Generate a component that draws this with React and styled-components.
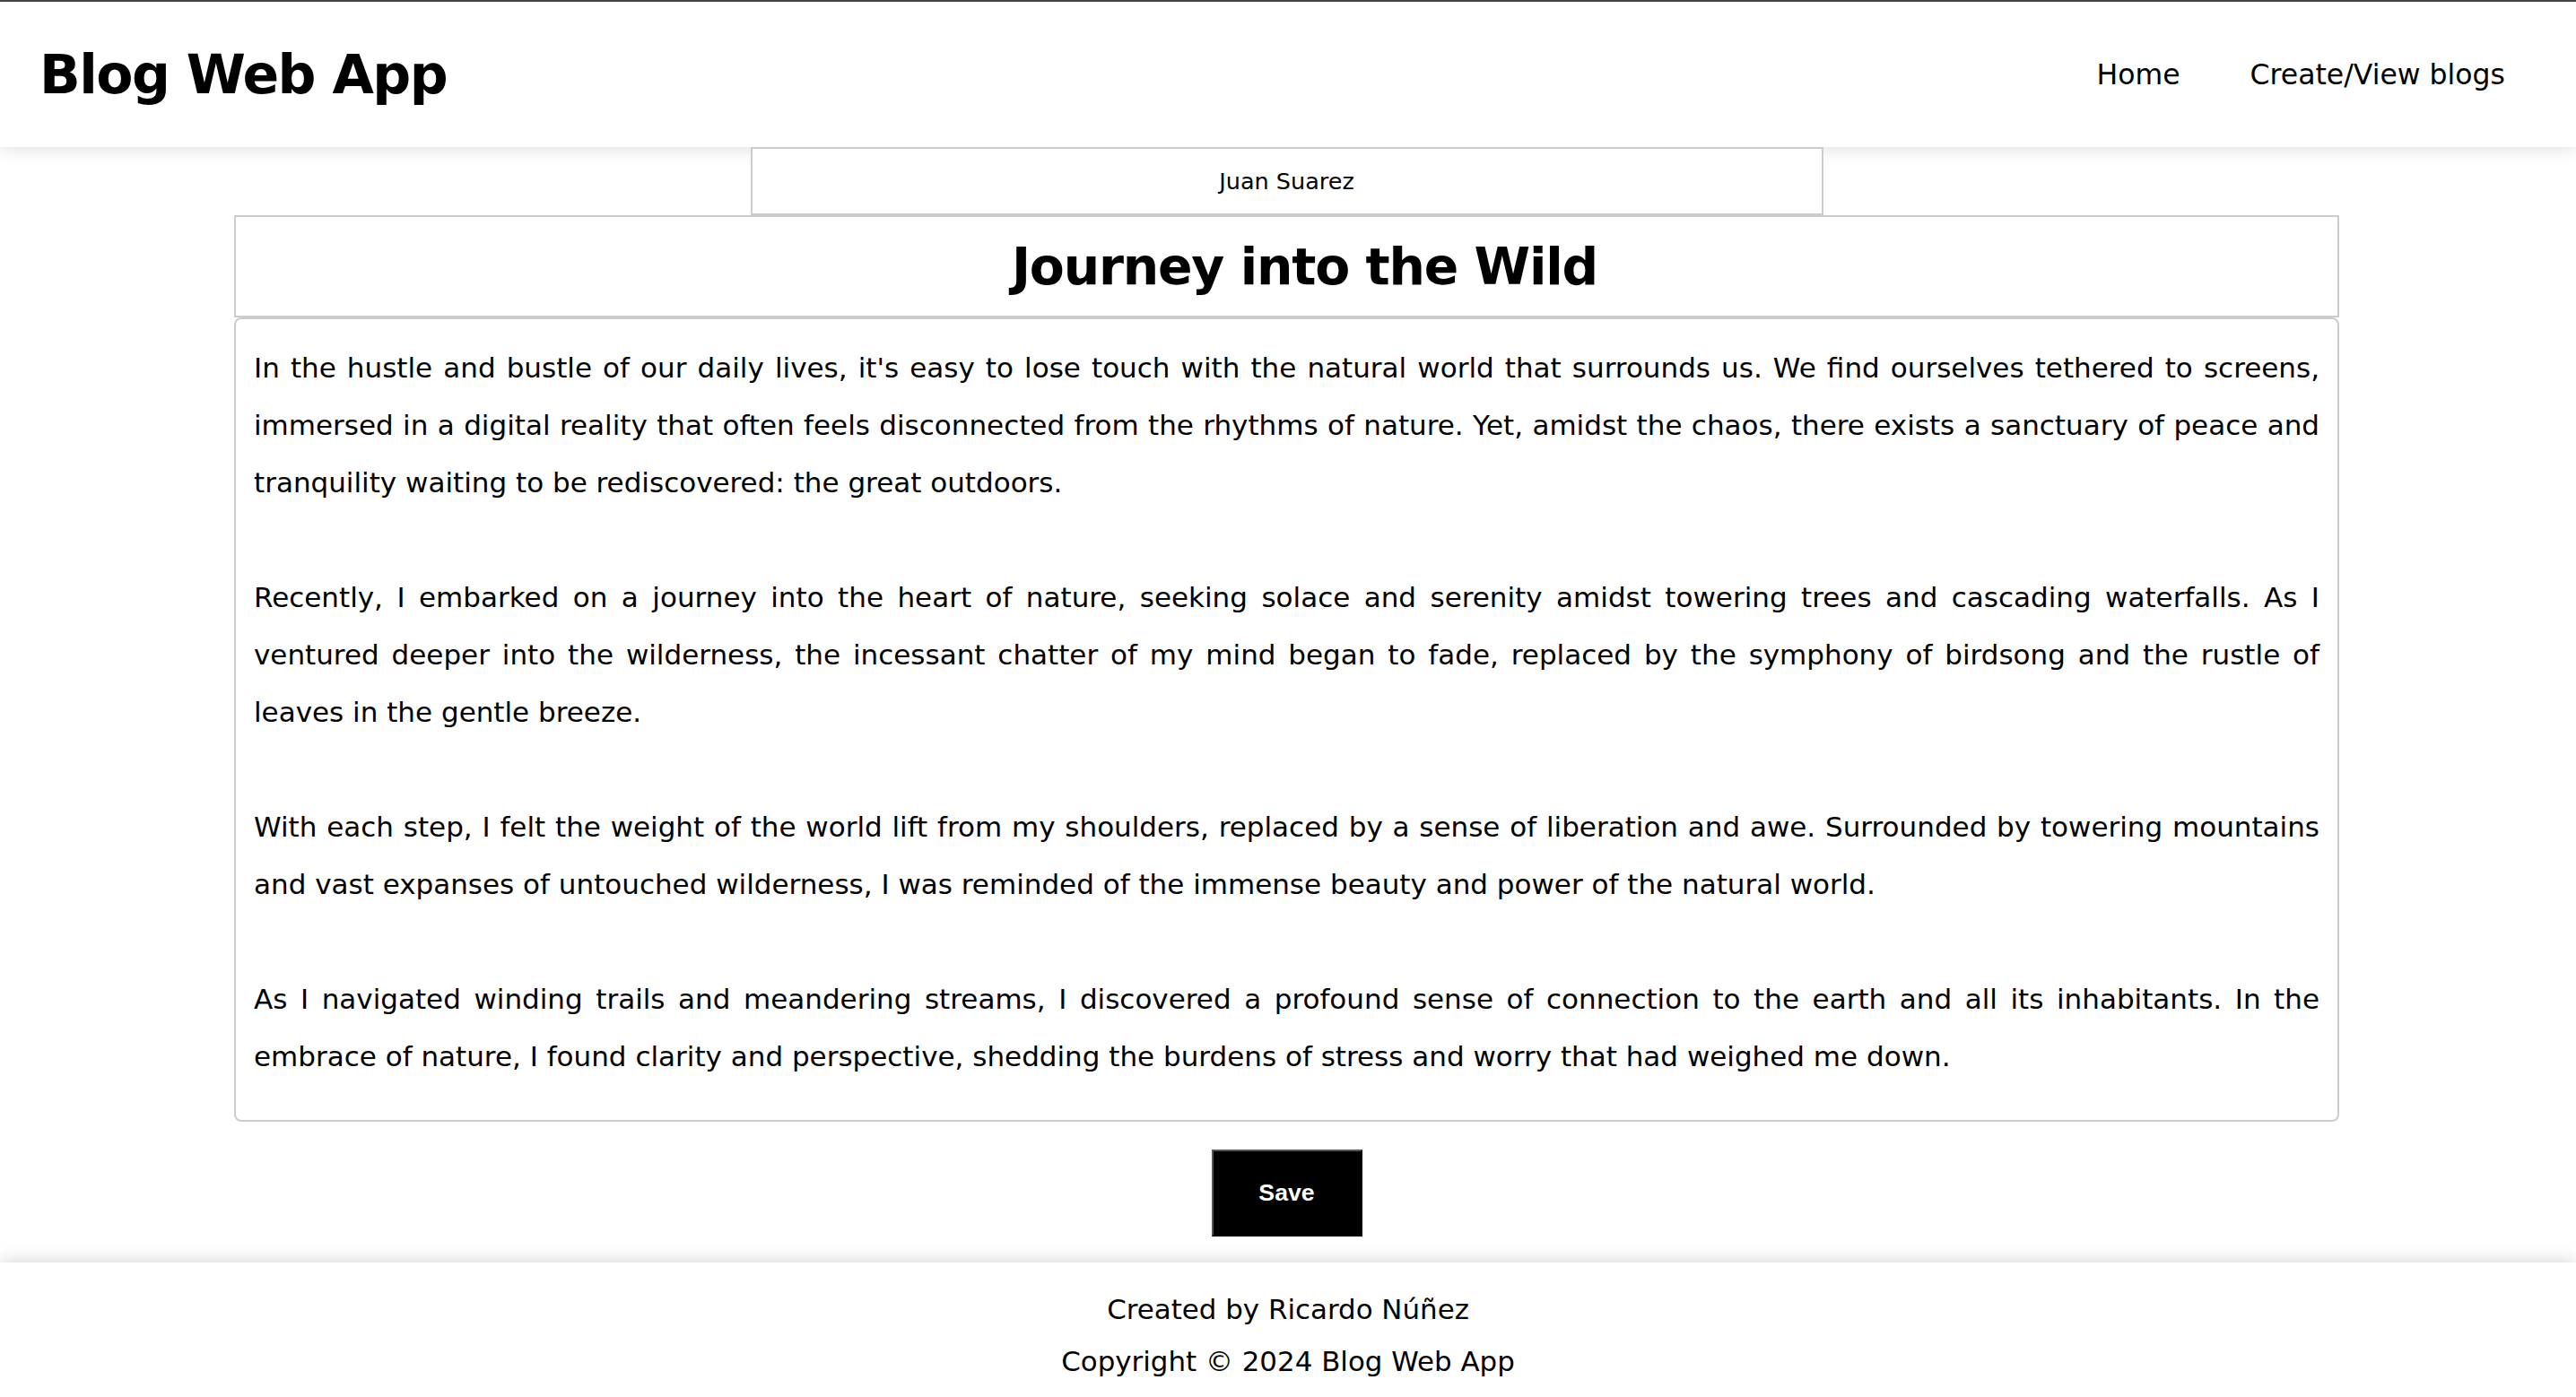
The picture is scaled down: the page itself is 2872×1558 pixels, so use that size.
import React from "react";
import styled, { createGlobalStyle } from "styled-components";

const GlobalStyle = createGlobalStyle`
  html, body {
    margin: 0;
    padding: 0;
    background: #ffffff;
  }
  body {
    font-family: "DejaVu Sans", Verdana, sans-serif;
    color: #000;
  }
  * { box-sizing: border-box; }
`;

const Page = styled.div`
  border-top: 2px solid #474747;
  display: flex;
  flex-direction: column;
  min-height: 100vh;
`;

const Header = styled.header`
  height: 162px;
  display: flex;
  align-items: center;
  justify-content: space-between;
  padding: 0 79px 0 44px;
  background: #fff;
  box-shadow: 0 2px 18px rgba(0, 0, 0, 0.13);
`;

const Brand = styled.div`
  font-family: "DejaVu Sans", Verdana, sans-serif;
  font-weight: 700;
  font-size: 60px;
  letter-spacing: -1.5px;
  line-height: 1;
`;

const Nav = styled.nav`
  display: flex;
  align-items: center;
  gap: 78px;
`;

const NavLink = styled.a`
  font-size: 31.5px;
  color: #000;
  text-decoration: none;
  cursor: pointer;
`;

const Main = styled.main`
  flex: 1;
  display: flex;
  flex-direction: column;
  align-items: center;
  padding-right: 3px;
`;

const AuthorField = styled.input`
  width: 1196px;
  height: 76px;
  border: 2px solid #cccccc;
  background: #fff;
  font-family: "DejaVu Sans", Verdana, sans-serif;
  font-size: 25.5px;
  color: #000;
  text-align: center;
  outline: none;
  padding: 0;
  margin: 0;
`;

const TitleBox = styled.div`
  width: 2347px;
  height: 114px;
  border: 2px solid #cccccc;
  display: flex;
  align-items: center;
  justify-content: center;
  padding-left: 40px;
`;

const Title = styled.h1`
  margin: 0;
  font-size: 56.8px;
  font-weight: 700;
  letter-spacing: -1.2px;
  line-height: 1;
`;

const Card = styled.div`
  width: 2347px;
  border: 2px solid #cccccc;
  border-radius: 8px;
  padding: 22px 20px 39px 20px;
  display: flex;
  flex-direction: column;
  gap: 64px;
`;

const Paragraph = styled.p`
  margin: 0;
  font-size: 31px;
  line-height: 64px;
  text-align: justify;
`;

const SaveButton = styled.button`
  margin-top: 31px;
  width: 168px;
  height: 97px;
  background: #000;
  color: #fff;
  font-family: "Liberation Sans", Arial, sans-serif;
  font-weight: 700;
  font-size: 26.67px;
  border-style: solid;
  border-width: 2px;
  border-color: #555555 #000000 #000000 #555555;
  padding: 0;
  cursor: pointer;
`;

const Footer = styled.footer`
  margin-top: 29px;
  padding: 23px 0 11px;
  background: #fff;
  box-shadow: 0 -2px 18px rgba(0, 0, 0, 0.16);
  text-align: center;
`;

const FooterLine = styled.div`
  font-size: 30.9px;
  line-height: 58px;
`;

const paragraphs = [
  "In the hustle and bustle of our daily lives, it's easy to lose touch with the natural world that surrounds us. We find ourselves tethered to screens, immersed in a digital reality that often feels disconnected from the rhythms of nature. Yet, amidst the chaos, there exists a sanctuary of peace and tranquility waiting to be rediscovered: the great outdoors.",
  "Recently, I embarked on a journey into the heart of nature, seeking solace and serenity amidst towering trees and cascading waterfalls. As I ventured deeper into the wilderness, the incessant chatter of my mind began to fade, replaced by the symphony of birdsong and the rustle of leaves in the gentle breeze.",
  "With each step, I felt the weight of the world lift from my shoulders, replaced by a sense of liberation and awe. Surrounded by towering mountains and vast expanses of untouched wilderness, I was reminded of the immense beauty and power of the natural world.",
  "As I navigated winding trails and meandering streams, I discovered a profound sense of connection to the earth and all its inhabitants. In the embrace of nature, I found clarity and perspective, shedding the burdens of stress and worry that had weighed me down.",
];

export default function App() {
  return (
    <>
      <GlobalStyle />
      <Page>
        <Header>
          <Brand>Blog Web App</Brand>
          <Nav>
            <NavLink>Home</NavLink>
            <NavLink>Create/View blogs</NavLink>
          </Nav>
        </Header>
        <Main>
          <AuthorField readOnly value="Juan Suarez" />
          <TitleBox>
            <Title>Journey into the Wild</Title>
          </TitleBox>
          <Card>
            {paragraphs.map((p, i) => (
              <Paragraph key={i}>{p}</Paragraph>
            ))}
          </Card>
          <SaveButton>Save</SaveButton>
        </Main>
        <Footer>
          <FooterLine>Created by Ricardo Núñez</FooterLine>
          <FooterLine>Copyright © 2024 Blog Web App</FooterLine>
        </Footer>
      </Page>
    </>
  );
}
